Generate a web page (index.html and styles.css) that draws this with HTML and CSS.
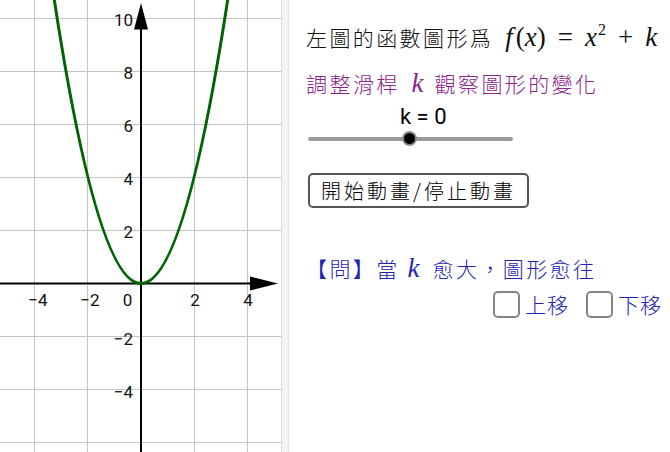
FILE: index.html
```html
<!DOCTYPE html>
<html lang="zh-Hant">
<head>
<meta charset="utf-8">
<title>函數圖形</title>
<link rel="stylesheet" href="styles.css">
</head>
<body>
<div class="app">
  <div class="graph">
    <svg width="281" height="452" viewBox="0 0 281 452" xmlns="http://www.w3.org/2000/svg">
      <g class="grid">
        <line x1="34.5" y1="0" x2="34.5" y2="452"/>
        <line x1="87.5" y1="0" x2="87.5" y2="452"/>
        <line x1="194.5" y1="0" x2="194.5" y2="452"/>
        <line x1="247.5" y1="0" x2="247.5" y2="452"/>
        <line x1="0" y1="18.5" x2="281" y2="18.5"/>
        <line x1="0" y1="71.5" x2="281" y2="71.5"/>
        <line x1="0" y1="124.5" x2="281" y2="124.5"/>
        <line x1="0" y1="177.5" x2="281" y2="177.5"/>
        <line x1="0" y1="230.5" x2="281" y2="230.5"/>
        <line x1="0" y1="336.5" x2="281" y2="336.5"/>
        <line x1="0" y1="389.5" x2="281" y2="389.5"/>
        <line x1="0" y1="442.5" x2="281" y2="442.5"/>
      </g>
      <g class="axis">
        <line x1="0" y1="283.5" x2="254" y2="283.5"/>
        <line x1="141" y1="452" x2="141" y2="26"/>
      </g>
      <polygon class="arrow" points="250,276.5 278,283.5 250,290.5"/>
      <polygon class="arrow" points="134,29.5 141,3 148,29.5"/>
      <g class="tick">
        <text x="133" y="26" text-anchor="end">10</text>
        <text x="133" y="79" text-anchor="end">8</text>
        <text x="133" y="132" text-anchor="end">6</text>
        <text x="133" y="185" text-anchor="end">4</text>
        <text x="133" y="238" text-anchor="end">2</text>
        <text x="133" y="345" text-anchor="end">−2</text>
        <text x="133" y="398" text-anchor="end">−4</text>
        <text x="38" y="306" text-anchor="middle">−4</text>
        <text x="90" y="306" text-anchor="middle">−2</text>
        <text x="127.5" y="306" text-anchor="middle">0</text>
        <text x="195" y="306" text-anchor="middle">2</text>
        <text x="248" y="306" text-anchor="middle">4</text>
      </g>
      <path class="curve" d="M50.9,-22.84 Q141,589.84 231.1,-22.84"/>
    </svg>
  </div>
  <div class="divider"></div>
  <div class="panel">
    <div class="line title">左圖的函數圖形爲<span class="math fx"><i class="fn">f</i>(<i>x</i>)<span class="op">=</span><i>x</i><sup>2</sup><span class="op">+</span><i>k</i></span></div>
    <div class="line purple">調整滑桿<span class="math kvar"><i>k</i></span>觀察圖形的變化</div>
    <div class="slider-label">k = 0</div>
    <div class="slider">
      <div class="track"></div>
      <div class="knob"></div>
    </div>
    <div class="button">開始動畫/停止動畫</div>
    <div class="line blue">【問】當<span class="math kvar q"><i>k</i></span>愈大，圖形愈往</div>
    <div class="choices">
      <span class="box"></span><span class="choice-text">上移</span>
      <span class="box second"></span><span class="choice-text">下移</span>
    </div>
  </div>
</div>
</body>
</html>
```

FILE: styles.css
```css
html, body {
  margin: 0;
  padding: 0;
  background: #ffffff;
}

body {
  width: 670px;
  height: 452px;
  overflow: hidden;
  font-family: "Noto Sans CJK TC", "Noto Sans", sans-serif;
}

.app {
  display: flex;
  height: 452px;
}

.graph {
  width: 281px;
  flex: none;
}

.graph svg {
  display: block;
}

.grid line {
  stroke: #c4c4c4;
  stroke-width: 1;
}

.axis line {
  stroke: #000000;
  stroke-width: 2;
}

.arrow {
  fill: #000000;
}

.curve {
  fill: none;
  stroke: #006400;
  stroke-width: 3;
}

.tick text {
  font-family: Roboto, "Liberation Sans", sans-serif;
  font-size: 17px;
  fill: #111111;
}

.divider {
  width: 8px;
  flex: none;
  box-sizing: border-box;
  background: #f3f3f3;
  border-left: 1px solid #dddddd;
  border-right: 1px solid #e4e4e4;
}

.panel {
  flex: 1;
  min-width: 0;
  padding: 23px 0 0 17px;
  overflow: hidden;
  white-space: nowrap;
}

.line {
  height: 28px;
  font-size: 21px;
  line-height: 28px;
  letter-spacing: 2.4px;
  font-weight: 300;
}

.title {
  color: #111111;
}

.purple {
  margin-top: 18px;
  color: #8b238b;
}

.blue {
  margin-top: 46px;
  color: #2323b8;
}

.math {
  font-family: "Liberation Serif", "DejaVu Serif", serif;
  font-size: 27px;
  letter-spacing: 0;
  font-weight: normal;
}

.math i {
  font-style: italic;
}

.math sup {
  font-size: 16px;
  line-height: 0;
  vertical-align: 11px;
  margin-left: 1px;
}

.fx {
  margin-left: 12px;
}

.fn {
  margin-right: 3px;
}

.op {
  margin: 0 12px;
}

.kvar {
  margin: 0 11px 0 12px;
}

.kvar.q {
  margin-left: 8px;
  margin-right: 13px;
}

.slider-label {
  margin-top: 8px;
  margin-left: 94px;
  height: 24px;
  font-family: Roboto, "Liberation Sans", sans-serif;
  font-size: 22px;
  line-height: 24px;
  color: #000000;
}

.slider {
  position: relative;
  margin-top: 2px;
  margin-left: 2px;
  width: 205px;
  height: 16px;
}

.track {
  position: relative;
  top: 6px;
  height: 4px;
  border-radius: 2px;
  background: #9a9a9a;
}

.knob {
  position: absolute;
  left: 94px;
  top: 0;
  width: 11px;
  height: 11px;
  border: 2.5px solid #8c8c8c;
  border-radius: 50%;
  background: #000000;
}

.button {
  margin-top: 26px;
  margin-left: 2px;
  width: 221px;
  height: 35px;
  box-sizing: border-box;
  border: 2px solid #555555;
  border-radius: 5px;
  background: #ffffff;
  display: flex;
  align-items: center;
  justify-content: center;
  font-size: 20px;
  font-weight: 300;
  letter-spacing: 3px;
  color: #000000;
}

.choices {
  margin-top: 9px;
  margin-left: 187px;
  height: 27px;
  display: flex;
  align-items: center;
  color: #2323b8;
  font-size: 21px;
  font-weight: 300;
  letter-spacing: 1px;
}

.box {
  width: 27px;
  height: 27px;
  box-sizing: border-box;
  border: 2px solid #858585;
  border-radius: 5px;
  background: #ffffff;
  flex: none;
}

.box.second {
  margin-left: 17px;
}

.choice-text {
  margin-left: 5px;
  line-height: 27px;
}
```
